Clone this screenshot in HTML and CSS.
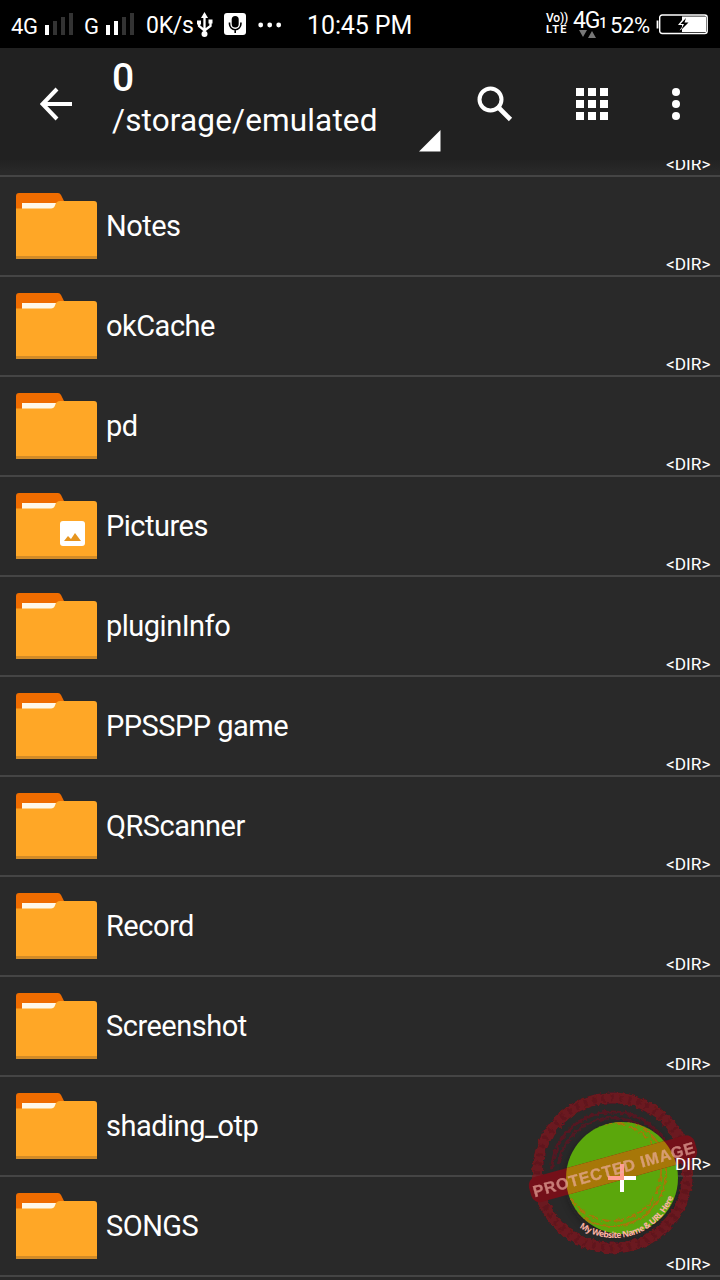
FILE: index.html
```html
<!DOCTYPE html>
<html lang="en">
<head>
<meta charset="utf-8">
<title>File manager</title>
<link rel="stylesheet" href="styles.css">
<script src="app.js" defer></script>
</head>
<body>
<div class="screen">
  <div class="status">
    <span class="net net-a">4G</span>
    <svg class="signal" width="29" height="24" viewBox="0 0 29 24"><path fill="#fff" d="M0 13h4v10H0z"/><path fill="#333" d="M8 9h4v14H8zM16 5h4v18h-4zM24 1h4v22h-4z"/></svg>
    <span class="net net-b">G</span>
    <svg class="signal signal-b" width="29" height="24" viewBox="0 0 29 24"><path fill="#fff" d="M0 13h4v10H0zM8 9h4v14H8z"/><path fill="#333" d="M16 5h4v18h-4zM24 1h4v22h-4z"/></svg>
    <span class="speed">0K/s</span>
    <svg class="usb" width="16" height="26" viewBox="0 0 16 26"><path fill="#fff" d="M7.500 0l3.500 6H4z"/><circle cx="7.500" cy="22" r="3" fill="#fff"/><path d="M7.500 5v17M2 10v4l5.500 4.500M13.500 9v5L7.500 18.500" fill="none" stroke="#fff" stroke-width="2.300"/><path fill="#fff" d="M0 8.500h4v4H0zM11.500 7.500h4v4h-4z"/></svg>
    <svg class="mic" width="22" height="22" viewBox="0 0 22 22"><rect width="22" height="22" rx="3" fill="#fff"/><rect x="7.700" y="3" width="7" height="11.500" rx="3.500"/><path d="M5.500 9.500v1.500a5.700 5.700 0 0 0 11.400 0v-1.500M11.200 16.500V20" fill="none" stroke="#000" stroke-width="1.600"/></svg>
    <svg class="dots" width="24" height="6" viewBox="0 0 24 6"><g fill="#fff"><circle cx="2.700" cy="3" r="2.400"/><circle cx="11.700" cy="3" r="2.400"/><circle cx="20.700" cy="3" r="2.400"/></g></svg>
    <span class="clock">10:45 PM</span>
    <span class="volte"><b class="vo">Vo))</b><b class="lte">LTE</b></span>
    <span class="data"><span class="data-label">4G<small>1</small></span>
      <svg class="arrows" width="17" height="8" viewBox="0 0 17 8"><path fill="#777" d="M0 0h8L4 7zM9 8h8l-4-7z"/></svg></span>
    <span class="percent">52%</span>
    <svg class="battery" width="52" height="21" viewBox="0 0 52 21"><path d="M1.500 6.500v8" stroke="#fff" stroke-width="1.800"/><rect x="3.700" y="1" width="47.500" height="18.500" rx="2.500" fill="none" stroke="#fff" stroke-width="1.400"/><path fill="#fff" d="M26 2.500h24V18H26z"/><path fill="#fff" d="M26 6l-4 5h4zM26 13l-2.500 3.500L26 15z"/><path d="M30 4l-5.500 6h3.500l-3 6 7.500-7.500H28.500z"/></svg>
  </div>

  <header class="bar">
    <svg class="back" width="34" height="34" viewBox="0 0 34 34"><path d="M32 17H3M17 2L2.500 17 17 32" fill="none" stroke="#fff" stroke-width="4"/></svg>
    <div class="path">
      <div class="title">0</div>
      <div class="folder-path">/storage/emulated</div>
    </div>
    <svg class="corner" width="22" height="22" viewBox="0 0 22 22"><path fill="#fff" d="M21.500 0v21.500H0z"/></svg>
    <svg class="search" width="36" height="36" viewBox="0 0 36 36"><circle cx="13.500" cy="13.500" r="11" fill="none" stroke="#fff" stroke-width="4"/><path d="M22 22l11.500 11.500" stroke="#fff" stroke-width="4.600"/></svg>
    <svg class="grid" width="32" height="32" viewBox="0 0 32 32"><path fill="#fff" d="M0 0h8v8H0zM12 0h8v8h-8zM24 0h8v8h-8zM0 12h8v8H0zM12 12h8v8h-8zM24 12h8v8h-8zM0 24h8v8H0zM12 24h8v8h-8zM24 24h8v8h-8z"/></svg>
    <svg class="more" width="8" height="32" viewBox="0 0 8 32"><g fill="#fff"><circle cx="4" cy="4" r="4"/><circle cx="4" cy="16" r="4"/><circle cx="4" cy="28" r="4"/></g></svg>
  </header>

  <main class="list" id="list"></main>

  <svg class="fab" width="200" height="190" viewBox="520 1080 200 190">
    <defs>
      <filter id="shade" x="-20%" y="-20%" width="140%" height="140%"><feGaussianBlur stdDeviation="4"/></filter>
      <filter id="worn" x="-5%" y="-5%" width="110%" height="110%"><feTurbulence type="fractalNoise" baseFrequency="0.25" numOctaves="2" seed="4"/><feDisplacementMap in="SourceGraphic" scale="5" xChannelSelector="R" yChannelSelector="G"/></filter>
      <clipPath id="disc"><circle cx="622" cy="1178" r="56"/></clipPath>
      <path id="arc" d="M579.500 1227.500A63 63 0 0 0 676 1188"/>
    </defs>
    <circle cx="622" cy="1181" r="55" fill="#151515" opacity=".5" filter="url(#shade)"/>
    <g fill="none" stroke="#8a0d18" filter="url(#worn)">
      <circle cx="612.500" cy="1173" r="75" stroke-width="11" opacity=".68"/>
      <circle cx="612.500" cy="1173" r="75" stroke-width="7" stroke="#4c1519" opacity=".35" stroke-dasharray="3 6"/>
      <circle cx="612.500" cy="1173" r="61" stroke-width="3" opacity=".45" stroke-dasharray="190 200" stroke-dashoffset="-195"/>
      <circle cx="612.500" cy="1173" r="55" stroke-width="2.500" opacity=".4" stroke-dasharray="165 181" stroke-dashoffset="-181"/>
    </g>
    <circle cx="622" cy="1178" r="56" fill="#5ba70c"/>
    <g clip-path="url(#disc)" fill="none" stroke="#a77708" filter="url(#worn)">
      <circle cx="612" cy="1172" r="54" stroke-width="2"/>
      <circle cx="612" cy="1172" r="49" stroke-width="2" stroke-dasharray="10 3"/>
    </g>
    <g transform="rotate(-15.500 612 1169)">
      <rect x="527" y="1156" width="172" height="26" rx="9" fill="#741019"/>
    </g>
    <g clip-path="url(#disc)"><rect x="527" y="1156" width="172" height="26" fill="#a77708" transform="rotate(-15.500 612 1169)"/></g>
    <path fill="#fff" d="M608 1176h28v4h-28zM620 1164h4v28h-4z"/>
    <path fill="#ff9d91" d="M608 1176h16v4h-16zM620 1164h4v14h-4z"/>
    <g transform="rotate(-15.500 612 1169)"><text class="stamp" x="530" y="1175.500" textLength="167" lengthAdjust="spacing">PROTECTED IMAGE</text></g>
    <text class="site"><textPath href="#arc" textLength="113">My Website Name &amp; URL Here</textPath></text>
    <text class="dir-tail" x="675" y="1169.500">DIR&gt;</text>
  </svg>
</div>
</body>
</html>
```
FILE: styles.css
```css
* { box-sizing: border-box; }
body { margin: 0; background: #292929; font-family: Roboto, sans-serif; color: #fff; }
svg { display: block; flex: none; }
.screen { position: relative; width: 720px; height: 1280px; overflow: hidden; background: #292929; }

.status { display: flex; height: 48px; background: #000; white-space: nowrap; line-height: 24px; align-items: flex-start; }
.status > span { flex: none; }
.net { font-size: 22px; letter-spacing: -.3px; padding-top: 15px; }
.net-a { margin-left: 11px; width: 34px; }
.signal { margin-top: 12px; }
.net-b { margin-left: 10px; width: 22px; }
.speed { width: 51px; margin-left: 11px; padding-top: 14px; font-size: 23px; letter-spacing: -.3px; }
.usb { margin-top: 12px; }
.mic { margin: 13px 0 0 11px; }
.dots { margin: 22px 0 0 12px; }
.clock { width: 219px; margin-left: 25px; padding-top: 14px; font-size: 25px; letter-spacing: -.1px; }
.volte { width: 27px; margin-left: 20px; padding-top: 13px; display: flex; flex-direction: column; font-size: 11px; line-height: 11px; }
.vo { font-weight: 500; font-size: 12px; letter-spacing: -.2px; }
.lte { font-weight: 700; font-size: 11px; letter-spacing: 1.400px; }
.data { width: 37px; padding-top: 9px; }
.data-label { display: block; height: 21px; line-height: 24px; font-size: 23px; letter-spacing: -1.200px; }
.data-label small { font-size: 14px; font-weight: 500; }
.arrows { margin-left: 6px; }
.percent { width: 46px; padding-top: 14px; font-size: 22px; letter-spacing: -.4px; }
.battery { margin-top: 14px; }

.bar { display: flex; align-items: flex-start; height: 112px; background: #212121; }
.back { margin: 39px 0 0 40px; }
.path { width: 307px; margin-left: 38px; }
.title { height: 54px; padding-top: 9px; line-height: 42px; font-size: 39px; font-weight: 500; }
.folder-path { font-size: 31.500px; line-height: 38px; letter-spacing: .15px; }
.corner { margin: 82px 0 0 0; }
.search { margin: 38px 0 0 36px; }
.grid { margin: 40px 0 0 63px; }
.more { margin: 40px 0 0 64px; }

.list { height: 1120px; overflow: hidden; background: linear-gradient(#222, #292929 12px); }
.row { display: flex; height: 100px; border-bottom: 2px solid #454545; padding-left: 16px; }
.row:first-child { margin-top: -83px; }
.icon { margin-top: 16px; }
.name { flex: 1; margin-left: 8px; font-size: 29px; line-height: 98px; letter-spacing: -.5px; }
.dir { align-self: flex-end; width: 45px; margin-right: 9px; font-size: 17.300px; line-height: 22px; }

.fab { position: absolute; left: 520px; top: 1080px; }
.stamp { font: 700 16px "Liberation Sans", sans-serif; fill: #efb0a4; stroke: #efb0a4; stroke-width: .3px; opacity: .68; }
.site { font: 700 8.500px "Open Sans", sans-serif; fill: #ffb3a5; }
.dir-tail { font: 17.300px Roboto, sans-serif; fill: #fff; }
```
FILE: app.js
```js
const names = ['', 'Notes', 'okCache', 'pd', 'Pictures', 'pluginInfo', 'PPSSPP game', 'QRScanner', 'Record', 'Screenshot', 'shading_otp', 'SONGS'];
const picture = '<rect x="44" y="28" width="25" height="25" rx="3" fill="#fff"/><path fill="#e6951f" d="M48 48l4-5 3 3 4-6 6 8z"/>';
const folder = extra => `<svg class="icon" width="82" height="66" viewBox="0 0 82 66">
  <path fill="#ef6c00" d="M0 24V3q0-3 3-3h39q2 0 3 2l3 6v12H0z"/>
  <path fill="#fff8e8" d="M6 10h37v8H6z"/>
  <path fill="#ffa726" d="M0 15.500h35q3 0 4-3 1-4.500 5-4.500h34q3 0 3 3v55H0z"/>
  <path fill="#d28b27" d="M0 63h81v3H0z"/>${extra}</svg>`;
document.getElementById('list').innerHTML = names.map(name =>
  `<div class="row">${folder(name === 'Pictures' ? picture : '')}<span class="name">${name}</span>` +
  (name === 'shading_otp' ? '' : '<span class="dir">&lt;DIR&gt;</span>') + '</div>').join('');
```
